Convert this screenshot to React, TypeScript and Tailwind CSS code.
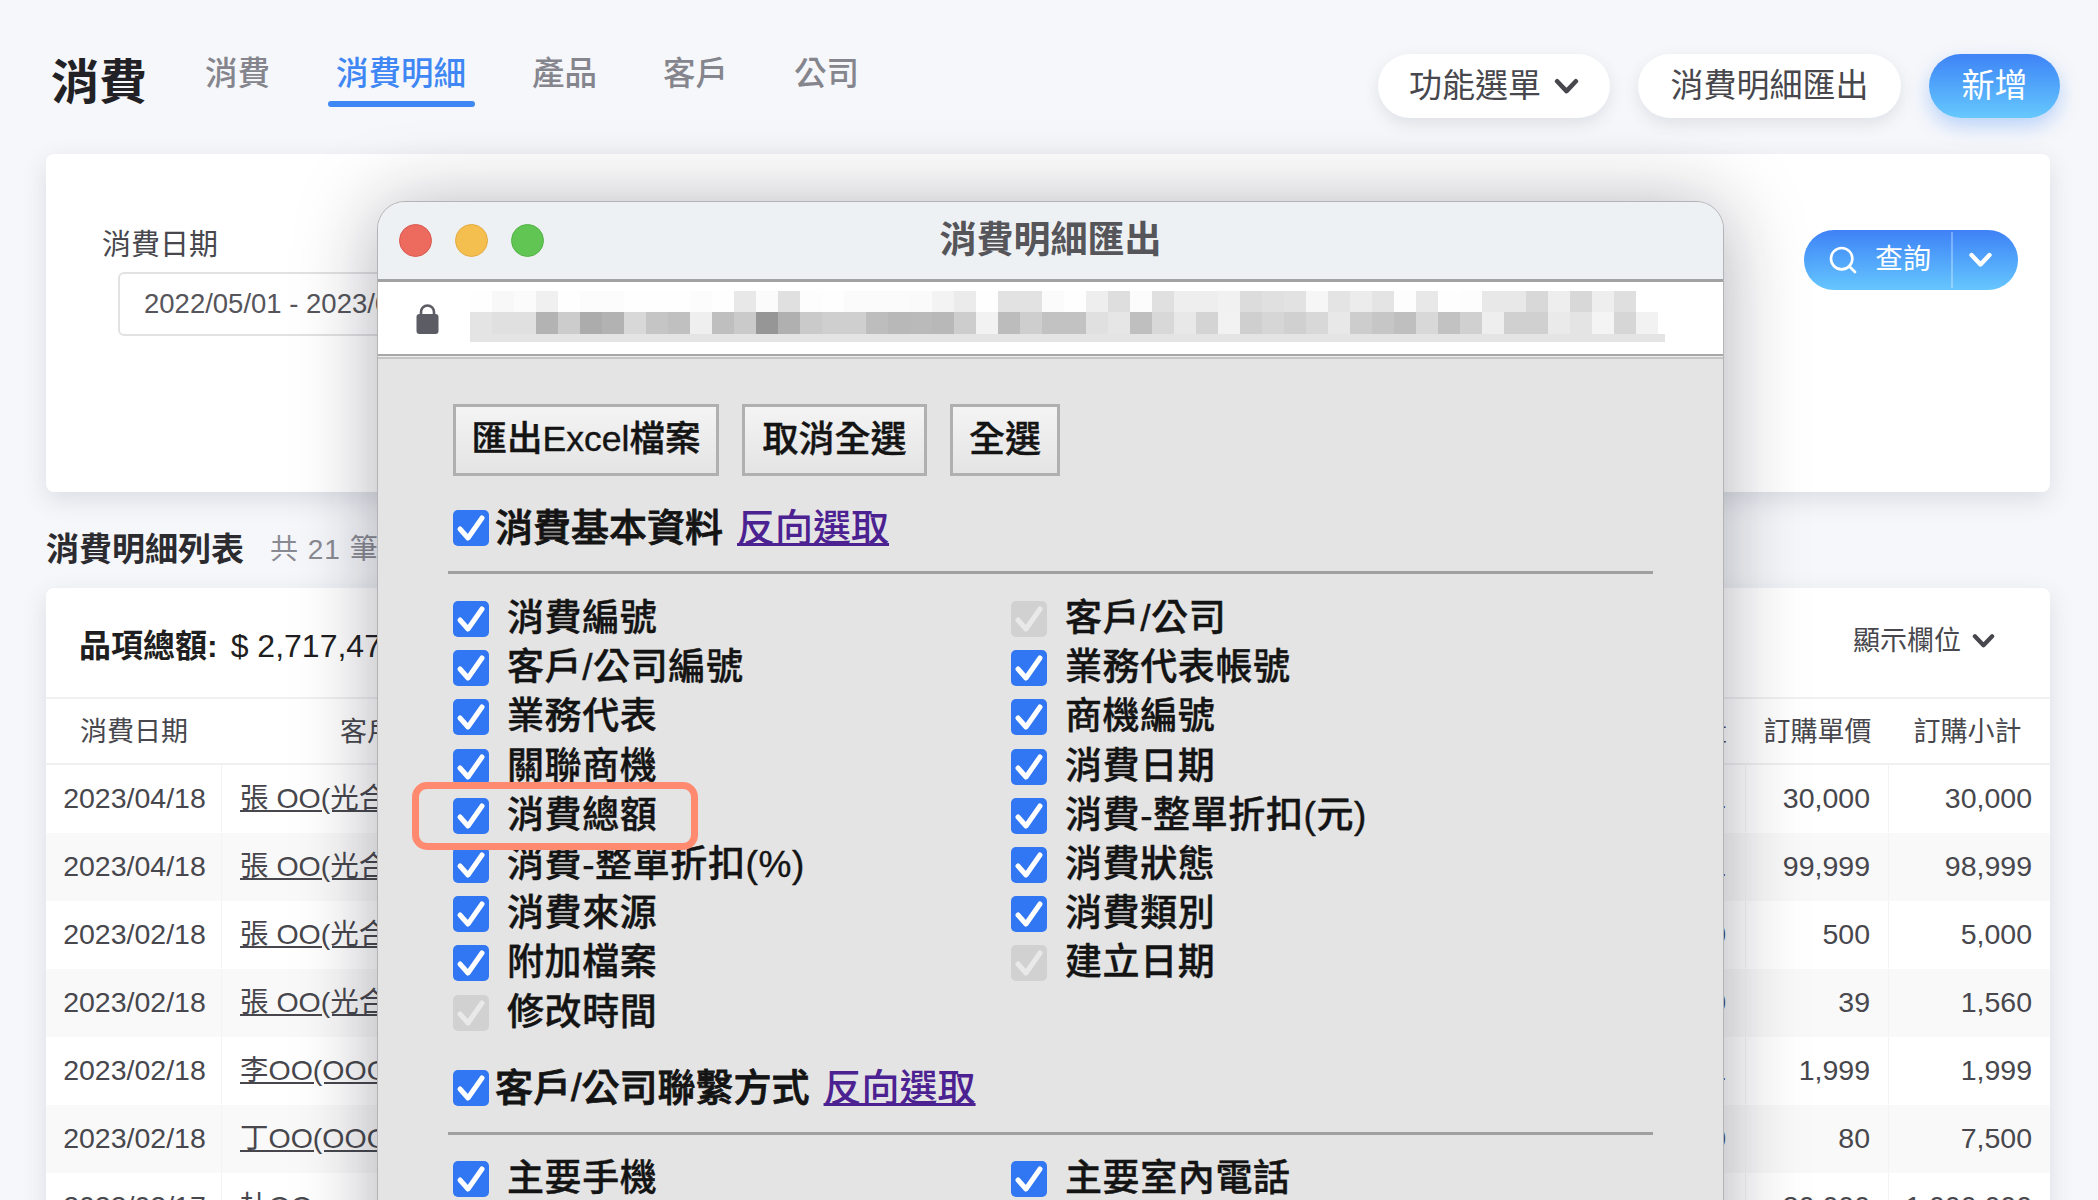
import React from "react";
import { Search } from "lucide-react";

const FONT = "[font-family:'Liberation_Sans','Noto_Sans_CJK_TC',sans-serif]";

const row1 = "fe f8 fb f0 fe fc fc fe fe fe fc fe e8 fb e0 fd fe fb fb fb fa f3 eb fe e2 e2 fb fe ee de fc e0 ee ee f1 dc e0 e2 f6 e4 ec e4 fd e8 fe fd e8 e8 d8 ee d8 ee df".split(" ");
const row2 = "e4 e0 e0 b3 cc ac b2 d8 c5 c0 ef bf ca 96 b0 ca cf cf bd b8 ba b8 cd f2 bc ce c2 c2 e0 e6 bf d8 e8 d4 f2 cf d6 d0 d8 e8 cd c6 bf d8 c2 d0 ee d0 d0 ea e4 f4 d6 f2".split(" ");

function Chevron({ className }: { className?: string }) {
  return (
    <svg viewBox="0 0 24 16" className={className} fill="none" stroke="currentColor" strokeWidth="4.4" strokeLinecap="round" strokeLinejoin="round">
      <polyline points="3,3 12,12.5 21,3" />
    </svg>
  );
}

function Check({ off }: { off?: boolean }) {
  return (
    <span className={off ? "w-[36px] h-[36px] shrink-0 rounded-[5px] bg-[#d1d1d1] flex" : "w-[36px] h-[36px] shrink-0 rounded-[5px] bg-[#3176f2] flex"}>
      <svg viewBox="0 0 36 36" className="w-[36px] h-[36px]" fill="none" stroke={off ? "#e9e9e9" : "#ffffff"} strokeWidth="5" strokeLinecap="round" strokeLinejoin="round">
        <polyline points="7,19 15,28 29,8" />
      </svg>
    </span>
  );
}

function Item({ label, off }: { label: string; off?: boolean }) {
  return (
    <div className="h-[49.2px] flex items-start gap-[18px]">
      <Check off={off} />
      <span className="text-[37px] leading-[36px] font-medium tracking-[0.6px] [-webkit-text-stroke:0.4px_#141414] text-[#141414] whitespace-nowrap">{label}</span>
    </div>
  );
}

function Heading({ label }: { label: string }) {
  return (
    <div className="flex items-center h-[36px]">
      <Check />
      <span className="ml-[6px] text-[38px] leading-[36px] font-medium [-webkit-text-stroke:0.8px_#141414] text-[#141414] whitespace-nowrap">{label}</span>
      <a className="ml-[14px] text-[38px] leading-[36px] font-medium text-[#4c2191] underline whitespace-nowrap">反向選取</a>
    </div>
  );
}

const left = ["消費編號", "客戶/公司編號", "業務代表", "關聯商機", "消費總額", "消費-整單折扣(%)", "消費來源", "附加檔案", "修改時間"];
const right = ["客戶/公司", "業務代表帳號", "商機編號", "消費日期", "消費-整單折扣(元)", "消費狀態", "消費類別", "建立日期"];

const rows = [
  ["2023/04/18", "張 OO(光合作用有限公司)", "1", "30,000", "30,000"],
  ["2023/04/18", "張 OO(光合作用有限公司)", "1", "99,999", "98,999"],
  ["2023/02/18", "張 OO(光合作用有限公司)", "10", "500", "5,000"],
  ["2023/02/18", "張 OO(光合作用有限公司)", "40", "39", "1,560"],
  ["2023/02/18", "李OO(OOOO有限公司)", "1", "1,999", "1,999"],
  ["2023/02/18", "丁OO(OOOO有限公司)", "100", "80", "7,500"],
  ["2023/02/17", "杜OO", "50", "30,000", "1,000,000"],
];

function Tab({ label, active }: { label: string; active?: boolean }) {
  return (
    <div className="relative">
      <span className={active ? "text-[32.5px] leading-[38px] font-medium text-[#3f87f5]" : "text-[32.5px] leading-[38px] font-medium text-[#85858d]"}>{label}</span>
      {active && <span className="absolute left-[-8px] right-[-9px] top-[46px] h-[6px] rounded-[3px] bg-[#3f87f5]" />}
    </div>
  );
}

export default function App() {
  return (
    <div className={`${FONT} relative w-[2098px] h-[1200px] overflow-hidden bg-[#f6f7fa]`}>
      {/* page header */}
      <header className="h-[154px] pl-[51px] pr-[38px] pt-[54px] flex items-start">
        <h1 className="text-[48px] leading-[56px] font-bold text-[#222226] mt-[1px]">消費</h1>
        <nav className="ml-[58px] mt-[1px] flex gap-[66px]">
          <Tab label="消費" />
          <Tab label="消費明細" active />
          <Tab label="產品" />
          <Tab label="客戶" />
          <Tab label="公司" />
        </nav>
        <div className="ml-auto flex gap-[28px]">
          <button className="h-[64px] w-[232px] rounded-[32px] bg-white shadow-[0_6px_16px_rgba(60,70,100,0.12)] flex items-center justify-center gap-[13px] text-[33px] font-normal text-[#47474d]">
            功能選單
            <Chevron className="w-[25px] h-[17px] text-[#47474d]" />
          </button>
          <button className="h-[64px] w-[263px] rounded-[32px] bg-white shadow-[0_6px_16px_rgba(60,70,100,0.12)] text-[33px] font-normal text-[#47474d]">
            消費明細匯出
          </button>
          <button className="h-[64px] w-[131px] rounded-[32px] bg-gradient-to-b from-[#3f83f6] to-[#67c8fd] shadow-[0_8px_20px_rgba(70,140,250,0.35)] text-[33px] font-normal text-white">
            新增
          </button>
        </div>
      </header>

      {/* query card */}
      <section className="relative ml-[46px] mr-[48px] h-[338px] rounded-[8px] bg-white shadow-[0_8px_24px_rgba(60,70,100,0.14)] pl-[56px] pt-[72px]">
        <div className="text-[29px] leading-[38px] text-[#47474d]">消費日期</div>
        <div className="ml-[16px] mt-[8px] w-[700px] h-[64px] rounded-[6px] border-2 border-[#e2e2e4] flex items-center pl-[24px] text-[27.5px] text-[#55555b]">
          2022/05/01 - 2023/04/30
        </div>
        <div className="absolute right-[32px] top-[76px] w-[214px] h-[60px] rounded-[30px] bg-gradient-to-b from-[#3f81f6] to-[#67c6fd] flex items-center text-white">
          <Search className="ml-[23px] w-[32px] h-[32px]" strokeWidth={2} />
          <span className="ml-[16px] text-[28px]">查詢</span>
          <span className="ml-[20px] w-[2px] h-[56px] bg-white/30" />
          <Chevron className="ml-[15px] w-[25px] h-[16px]" />
        </div>
      </section>

      {/* list title */}
      <div className="h-[96px] pl-[46px] pt-[19px] flex items-center">
        <h2 className="text-[33px] font-bold text-[#2c2c30]">消費明細列表</h2>
        <span className="ml-[26px] text-[28px] text-[#8a8a92] tracking-[1px]">共 21 筆資料</span>
      </div>

      {/* list card */}
      <section className="ml-[46px] mr-[48px] rounded-[8px] bg-white shadow-[0_8px_24px_rgba(60,70,100,0.14)] overflow-hidden">
        <div className="h-[109px] pl-[33px] pr-[55px] flex items-center justify-between">
          <div className="text-[#1f1f22] mt-[6px] flex items-baseline">
            <span className="text-[32px] font-bold">品項總額:</span>
            <span className="ml-[13px] text-[32px]">$ 2,717,470</span>
          </div>
          <div className="flex items-center gap-[11px] text-[27px] text-[#47474d] -mt-[3px]">
            顯示欄位
            <Chevron className="w-[23px] h-[16px]" />
          </div>
        </div>
        <div className="h-[68px] pt-[2px] border-y-2 border-[#f0f0f1] grid grid-cols-[176px_1fr_150px_143px_161px] items-center text-[27px] text-[#47474d]">
          <span className="text-center">消費日期</span>
          <span className="pl-[118px]">客戶/公司</span>
          <span className="text-right pr-[19px]">訂購數量</span>
          <span className="text-center">訂購單價</span>
          <span className="text-center pr-[4px]">訂購小計</span>
        </div>
        {rows.map((r, i) => (
          <div
            key={i}
            className={
              i % 2 === 0
                ? "h-[68px] pb-[1px] grid grid-cols-[176px_1fr_150px_143px_161px] text-[28.5px] text-[#47474d] bg-white"
                : "h-[68px] pb-[1px] grid grid-cols-[176px_1fr_150px_143px_161px] text-[28.5px] text-[#47474d] bg-[#f9f9f9]"
            }
          >
            <span className="flex items-center justify-center pl-[2px] border-r border-[#f3f3f4]">{r[0]}</span>
            <span className="flex items-center pl-[18px]"><a className="underline whitespace-nowrap">{r[1]}</a></span>
            <span className="flex items-center justify-end pr-[19px] border-r border-[#f3f3f4]">{r[2]}</span>
            <span className="flex items-center justify-end pr-[18px] border-r border-[#f3f3f4]">{r[3]}</span>
            <span className="flex items-center justify-end pr-[18px]">{r[4]}</span>
          </div>
        ))}
      </section>

      {/* browser window floating on the page */}
      <div className="absolute left-[377px] top-[201px] w-[1347px] h-[1100px] rounded-t-[28px] border border-[#b4b4b6] bg-[#e4e4e4] overflow-hidden shadow-[0_6px_80px_rgba(20,20,40,0.34)]">
        <div className="relative h-[80px] bg-[#eef1f3] border-b-[3px] border-[#a2a2a2] flex items-center pl-[21px] gap-[23px]">
          <span className="w-[33px] h-[33px] rounded-full bg-[#ec6a5e] border border-[#d9574c]" />
          <span className="w-[33px] h-[33px] rounded-full bg-[#f5bf4f] border border-[#e3a93f]" />
          <span className="w-[33px] h-[33px] rounded-full bg-[#61c554] border border-[#52b246]" />
          <span className="absolute left-0 right-0 mt-[1px] text-center text-[37px] font-bold text-[#55555a]">消費明細匯出</span>
        </div>
        <div className="h-[72px] bg-white flex items-start pl-[38px]">
          <svg viewBox="0 0 23 30" className="w-[23px] h-[30px] mt-[22px] shrink-0">
            <path d="M5 12V8a6.5 6.5 0 0 1 13 0v4" fill="none" stroke="#5c5c64" strokeWidth="2.6" />
            <rect x="0.5" y="10" width="22" height="20" rx="3" fill="#5c5c64" />
          </svg>
          <div className="ml-[31px] mt-[9px] flex flex-col">
            <div className="flex h-[21px]">
              {row1.map((c, i) => (
                <span key={i} className="w-[22px] shrink-0" style={{ backgroundColor: `#${c}${c}${c}` }} />
              ))}
            </div>
            <div className="flex h-[22px]">
              {row2.map((c, i) => (
                <span key={i} className="w-[22px] shrink-0" style={{ backgroundColor: `#${c}${c}${c}` }} />
              ))}
            </div>
            <div className="h-[8px] w-[1195px] bg-[#e4e4e4]" />
          </div>
        </div>
        <div className="h-[5px] border-t-2 border-b-2 border-t-[#a8a8a8] border-b-[#c6c6c6] bg-[#eeeeee]" />

        <div className="pl-[75px] pt-[45px] w-[1280px]">
          <div className="flex gap-[23px]">
            <button className="h-[72px] w-[266px] border-[3px] border-[#b0b0b0] bg-gradient-to-b from-[#f4f4f4] to-[#e4e4e4] text-[35.5px] font-medium [-webkit-text-stroke:0.4px_#141414] text-[#141414] whitespace-nowrap">匯出Excel檔案</button>
            <button className="h-[72px] w-[185px] border-[3px] border-[#b0b0b0] bg-gradient-to-b from-[#f4f4f4] to-[#e4e4e4] text-[36px] font-medium [-webkit-text-stroke:0.4px_#141414] text-[#141414] whitespace-nowrap">取消全選</button>
            <button className="h-[72px] w-[110px] border-[3px] border-[#b0b0b0] bg-gradient-to-b from-[#f4f4f4] to-[#e4e4e4] text-[36px] font-medium [-webkit-text-stroke:0.4px_#141414] text-[#141414] whitespace-nowrap">全選</button>
          </div>
          <div className="mt-[34px]">
            <Heading label="消費基本資料" />
          </div>
          <hr className="-ml-[5px] mt-[25px] h-[3px] w-[1205px] border-0 bg-[#a0a0a0]" />
          <div className="mt-[27px] flex">
            <div className="w-[558px]">
              {left.map((l) => (
                <Item key={l} label={l} off={l === "修改時間"} />
              ))}
            </div>
            <div>
              {right.map((l) => (
                <Item key={l} label={l} off={l === "客戶/公司" || l === "建立日期"} />
              ))}
            </div>
          </div>
          <div className="mt-[26px]">
            <Heading label="客戶/公司聯繫方式" />
          </div>
          <hr className="-ml-[5px] mt-[26px] h-[3px] w-[1205px] border-0 bg-[#a0a0a0]" />
          <div className="mt-[26px] flex">
            <div className="w-[558px]"><Item label="主要手機" /></div>
            <div><Item label="主要室內電話" /></div>
          </div>
        </div>
      </div>

      {/* annotation */}
      <div className="absolute left-[412px] top-[782px] w-[286px] h-[68px] border-[7px] border-[#ff8a70] rounded-[15px]" />
    </div>
  );
}
